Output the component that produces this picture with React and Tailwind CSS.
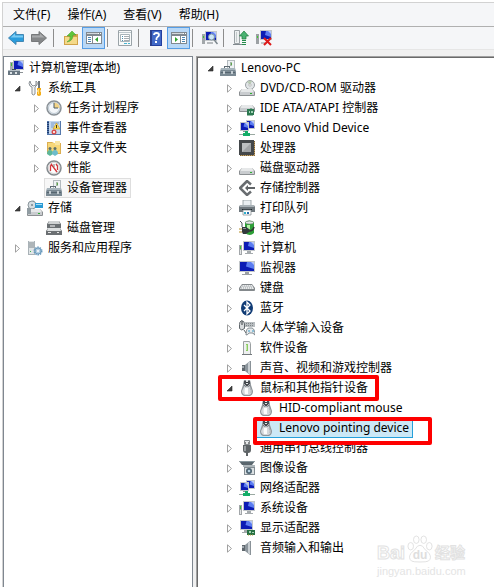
import { clsx } from "clsx";

const menus = ["文件(F)", "操作(A)", "查看(V)", "帮助(H)"];

function Icon({ children, className }) {
  return (
    <svg viewBox="0 0 16 16" className={clsx("size-4 shrink-0", className)} aria-hidden="true">
      {children}
    </svg>
  );
}

/* ---------- shared drawing parts ---------- */

function Screen({ x = 4, y = 1, w = 12, h = 9 }) {
  return (
    <g>
      <rect x={x} y={y} width={w} height={h} fill="#c3c7ca" />
      <rect x={x + 1} y={y + 1} width={w - 2} height={h - 2} fill="#0c1cb4" />
      <path d={`M${x + w / 2} ${y + 1}H${x + w - 1}V${y + h - 3}L${x + w / 2 - 1} ${y + h / 2}Z`} fill="#5c7df0" />
      <path d={`M${x + w - 4} ${y + 1}h3v3z`} fill="#b3c6fa" />
    </g>
  );
}

function Drive({ y = 8 }) {
  return (
    <g>
      <path d={`M3 ${y}h10l3 3v3q0 1-1 1H1q-1 0-1-1v-3z`} fill="#8b8f92" />
      <path d={`M3 ${y}h10l2 3H1z`} fill="#e6e8e9" />
      <rect x="1" y={y + 3} width="14" height="3" fill="#c9cccf" />
      <rect x="11" y={y + 4} width="2" height="1" fill="#2faf33" />
    </g>
  );
}

function Speaker() {
  return (
    <Icon>
      <path d="M3 5h3v6H3z" fill="#5f676d" />
      <path d="M3 6h2v2H3z" fill="#a2aab0" />
      <path d="M6 5l5-4v14l-5-4z" fill="#8d969d" />
      <path d="M9 3l2-2v14l-2-2z" fill="#c8ced2" />
      <path d="M11.500 1v14" stroke="#8a9298" />
    </Icon>
  );
}

function Mouse() {
  return (
    <Icon>
      <path d="M5 0h6q1 3 1 5l2 6q0 4-3 5H5q-3-1-3-5l2-6q0-2 1-5z" fill="#8f959a" />
      <path d="M6 5h4l3 6q0 3-3 4H6q-3-1-3-4z" fill="#d3d7da" />
      <path d="M5 1h6v4L9 7H7L5 5z" fill="#484d52" />
      <path d="M7 0h2v4H7z" fill="#e4e6e8" />
      <path d="M7 2.500h2" stroke="#33383c" />
      <path d="M5 4l3 3 3-3" fill="none" stroke="#c9cdd0" strokeWidth=".8" />
      <path d="M6 8h3v6H6q-1-3 0-6z" fill="#fafbfb" />
      <path d="M11 8q2 3 1 5" fill="none" stroke="#a9aeb2" />
    </Icon>
  );
}

function ComputerTower() {
  return (
    <Icon>
      <rect x="0" y="5" width="3" height="10" fill="#a2a6a9" />
      <rect x="1" y="6" width="1" height="3" fill="#3bc437" />
      <path d="M1 10h1v4H1z" fill="#e3e5e6" />
      <Screen x={4} y={1} w={12} h={10} />
      <path d="M8 11h4v2h2v1H6v-1h2z" fill="#a6abae" />
    </Icon>
  );
}

function NetworkPair() {
  return (
    <Icon>
      <Screen x={7} y={0} w={9} h={9} />
      <Screen x={1} y={2} w={9} h={9} />
      <path d="M4 11h4v1H4z" fill="#8b9194" />
      <path d="M0 14h16v1H0z" fill="#9aa9a2" />
      <path d="M6 11h3v2h2v3H4v-3h2z" fill="#14ad68" />
    </Icon>
  );
}

function Toolbox() {
  return (
    <Icon>
      <path d="M7 0h8v9H7z" fill="#b4bbbf" />
      <path d="M8 1h6v8H8z" fill="#eef2f4" />
      <path d="M10 2h2v4h-2z" fill="#a3b8a5" />
      <path d="M11 3h1v2h-1z" fill="#5ba549" />
      <path d="M4 6h6v2H9V7H5v1H4z" fill="#5d6a72" />
      <path d="M1 8h14l1 4v4H0v-4z" fill="#7a8993" />
      <path d="M1 8h14v2H1z" fill="#a5b3bb" />
      <path d="M1 12h14v1H1z" fill="#566570" />
      <path d="M3 11h2v3H3zM11 11h2v3h-2z" fill="#c5ced3" />
    </Icon>
  );
}

/* ---------- tree icons ---------- */

const icons = {
  management: (
    <Icon>
      <rect x="2" y="2" width="3" height="8" fill="#a9adb0" />
      <rect x="3" y="3" width="1" height="3" fill="#45bb37" />
      <Screen x={5} y={0} w={11} h={10} />
      <path d="M4 9h4v2H4z" fill="#444d55" />
      <path d="M0 10h12v5H0z" fill="#687681" />
      <path d="M0 10h12v1H0z" fill="#b5bfc6" />
      <path d="M2 12h2v2H2zM7 12h2v2H7z" fill="#dce2e5" />
      <path d="M12 12h3v1h-3z" fill="#8b9195" />
    </Icon>
  ),
  tools: (
    <Icon>
      <path d="M3 1Q1 3 3 6l2 1v7q1 2 3 0V7l2-2q1-3-1-4v4L6 6 4 4z" fill="#f2f4f5" stroke="#8b9196" strokeWidth="1" />
      <path d="M11 1h2v7h-2z" fill="#70777c" />
      <path d="M10 8h4v2l-1 1 1 1v3q-2 2-4 0v-3l1-1-1-1z" fill="#f3ad19" />
      <path d="M11 9h1v5h-1z" fill="#ffdc72" />
    </Icon>
  ),
  clock: (
    <Icon>
      <circle cx="8" cy="8" r="7" fill="#e7edf2" stroke="#8a9197" strokeWidth="1.5" />
      <circle cx="8" cy="8" r="5.5" fill="#f4f7fa" stroke="#bcc8d1" strokeWidth="1" />
      <path d="M8 8V2.500A5.500 5.500 0 0 1 13.500 8z" fill="#f2d386" />
      <path d="M8 3v5h4" fill="none" stroke="#4b5b67" />
    </Icon>
  ),
  events: (
    <Icon>
      <path d="M1 1h14v14H1z" fill="#5578ac" />
      <path d="M3 1h11v13H3z" fill="#c6d8ee" />
      <path d="M2 2v12" stroke="#203e71" strokeWidth="2" strokeDasharray="1 1" />
      <path d="M5 3h8M5 5h3M5 7h3" stroke="#7a9cc9" />
      <path d="M10.500 3l3.500 6H7z" fill="#fbdc5a" stroke="#c99a1c" strokeWidth=".6" />
      <path d="M10.500 5v3" stroke="#3e3514" />
      <circle cx="8" cy="12" r="2.5" fill="#d84d4d" />
      <path d="M7 11l2 2m0-2l-2 2" stroke="#fff" strokeWidth=".8" />
    </Icon>
  ),
  shared: (
    <Icon>
      <path d="M1 2h5l2 1h7v11H1z" fill="#dcae50" />
      <path d="M2 3h12v10H2z" fill="#f7d778" />
      <path d="M9 1h5v4H9z" fill="#f9e5a3" />
      <circle cx="4" cy="8.500" r="1.500" fill="#5c6f6a" />
      <circle cx="9" cy="8.500" r="1.500" fill="#5c6f6a" />
      <path d="M1 14q0-4 3-4t3 4l-3 2z" fill="#5db79a" />
      <path d="M6 14q0-4 3-4t3 4l-3 2z" fill="#6cbccb" />
    </Icon>
  ),
  performance: (
    <Icon>
      <circle cx="8" cy="8" r="7" fill="#f8f8f8" stroke="#858b8f" strokeWidth="1.500" />
      <circle cx="8" cy="8" r="5.500" fill="#fff" stroke="#bbb" strokeWidth=".6" />
      <path d="M4.500 11V6l1.500-2M10 4l1.500 2v4M5 4l6 8" fill="none" stroke="#d3343a" strokeWidth="1.300" />
      <path d="M8 4v3" stroke="#777" />
    </Icon>
  ),
  toolbox: <Toolbox />,
  storage: (
    <Icon>
      <path d="M2 2l5-2 1 6-6 2z" fill="#c5ced2" />
      <circle cx="5" cy="5" r="4" fill="#d7dde1" stroke="#89959b" />
      <circle cx="5" cy="5" r="1" fill="#77858d" />
      <rect x="8" y="3" width="8" height="5" fill="#2b9bd5" />
      <path d="M9 4h6v1H9z" fill="#a9dff8" />
      <Drive y={9} />
      <path d="M0 8h4v6H0z" fill="#919ca2" />
    </Icon>
  ),
  disk: (
    <Icon>
      <path d="M3 1h10l2 3v4H1V4z" fill="#6b7073" />
      <path d="M3 1h10l1 3H2z" fill="#cfd2d3" />
      <path d="M2 5h12v2H2z" fill="#6a6f72" />
      <path d="M2 8h12l2 3v4H0v-4z" fill="#6c7073" />
      <path d="M2 8h12l1 3H1z" fill="#dde0e1" />
      <path d="M2 12h3v1H2zM11 12h2v1h-2z" fill="#e6e6e6" />
      <path d="M4 6h5" stroke="#fff" />
    </Icon>
  ),
  services: (
    <Icon>
      <path d="M1 1h7v14H1z" fill="#a9b2b7" />
      <path d="M2 1h5v13H2z" fill="#e1e5e7" />
      <path d="M2 3h5M2 5h5M2 7h5" stroke="#7b858b" />
      <path d="M3 11h1v1H3z" fill="#3bb24a" />
      <circle cx="11" cy="11" r="3.500" fill="#cfe0ec" stroke="#6799bd" strokeWidth="2" strokeDasharray="1.400 .8" />
      <circle cx="11" cy="11" r="3" fill="#b2cee2" stroke="#6594b8" strokeWidth=".8" />
      <circle cx="11" cy="11" r="1" fill="#fff" />
    </Icon>
  ),
  dvd: (
    <Icon>
      <circle cx="11" cy="5" r="4.500" fill="#e1e5e7" stroke="#9aa0a4" />
      <path d="M11 5L8 2q3-2 5-1z" fill="#b9cbb4" />
      <circle cx="11" cy="5" r="1.200" fill="#fff" stroke="#999" strokeWidth=".6" />
      <Drive y={9} />
    </Icon>
  ),
  ide: (
    <Icon>
      <Drive y={5} />
      <rect x="8" y="9" width="7" height="6" fill="#2c7850" />
      <path d="M9 15v1m2-1v1m2-1v1M12 8v2" stroke="#2c7850" />
      <path d="M10 11h1v2h-1zM12 11h2v2h-2z" fill="#a5d3b8" />
    </Icon>
  ),
  network: <NetworkPair />,
  cpu: (
    <Icon>
      <rect x="1" y="1" width="15" height="15" fill="#c2a269" />
      <path d="M15.500 1v14.500H1" fill="none" stroke="#785e35" strokeDasharray="1 1" />
      <rect x="0" y="0" width="15" height="15" fill="#43474a" />
      <rect x="3" y="3" width="9" height="9" fill="#a0a3a6" />
      <path d="M3 3h9L3 12z" fill="#bcbfc1" />
    </Icon>
  ),
  drive: <Icon><Drive y={8} /></Icon>,
  controller: (
    <Icon>
      <path d="M12 4.500L8 1 1 8l7 7 4-3.500" fill="none" stroke="#696d70" strokeWidth="2.500" />
      <path d="M6 8l3-3v2h7v2H9v2z" fill="#606467" />
      <path d="M3 8l5-5" stroke="#a9acae" />
    </Icon>
  ),
  printer: (
    <Icon>
      <path d="M4 0h8v6H4z" fill="#e9eef1" stroke="#8e989d" strokeWidth=".8" />
      <path d="M1 5h14l1 2v5H0V7z" fill="#6f787e" />
      <path d="M1 5h14v2H1z" fill="#a8b1b6" />
      <path d="M3 9h10v1H3z" fill="#20282d" />
      <path d="M4 10h8v5H4z" fill="#fff" stroke="#7d858a" strokeWidth=".7" />
      <path d="M5 12h2v2H5z" fill="#2eb0cc" />
      <path d="M8 12h2v2H8z" fill="#286dac" />
    </Icon>
  ),
  battery: (
    <Icon>
      <path d="M6 2q4-3 9 0v11q-4 4-9 0z" fill="#2d9f37" />
      <ellipse cx="10.500" cy="2.500" rx="4" ry="1.500" fill="#e2e8e5" stroke="#78837d" strokeWidth=".7" />
      <path d="M8 5h3v4H8z" fill="#b5f0a6" />
      <path d="M1 1l2 2v4" fill="none" stroke="#4d565a" />
      <path d="M3 7h4l3 2v3l-3 2H4l-1-2z" fill="#32393c" />
      <path d="M4 8h3v1H4z" fill="#878f92" />
      <path d="M0 9h3M0 12h3" stroke="#b38d25" />
      <path d="M10 11q4 0 5-4" fill="none" stroke="#333" strokeWidth="1.500" />
    </Icon>
  ),
  computer: <ComputerTower />,
  monitor: (
    <Icon>
      <Screen x={0} y={1} w={16} h={11} />
      <path d="M6 12h4v2h3v1H3v-1h3z" fill="#9ba0a3" />
    </Icon>
  ),
  keyboard: (
    <Icon>
      <path d="M3 4h10l3 4v2q0 1-1 1H1q-1 0-1-1V8z" fill="#84898c" />
      <path d="M3 5h10l2 4H1z" fill="#e8eaeb" />
      <path d="M3 6h10M2 8h12" stroke="#a2a7aa" strokeDasharray="1 1" />
      <path d="M3 7h10" stroke="#b5babd" strokeDasharray="1 1" strokeDashoffset="1" />
    </Icon>
  ),
  bluetooth: (
    <Icon>
      <ellipse cx="8" cy="8" rx="6" ry="7.500" fill="#103b75" />
      <path d="M5 5l6 6-3 3V2l3 3-6 6" fill="none" stroke="#fff" strokeWidth="1.300" />
    </Icon>
  ),
  hid: (
    <Icon>
      <path d="M2.500.5q-2 1-2 4v4q2 3 5 0V4q0-3-3-3.500z" fill="#d9dcde" stroke="#5f666b" />
      <path d="M3 1v4" stroke="#343b3f" />
      <path d="M6 2h10v5H6z" fill="#b8bdc0" />
      <path d="M7 3.500h8M7 5.500h8" stroke="#7f8589" strokeDasharray="1 1" />
      <path d="M7 15q0-7 3-7h3q3 1 3 7-2-1-2-2h-4q-1 2-3 2z" fill="#e5e9eb" stroke="#6d777d" strokeWidth=".8" />
      <path d="M9 11h2m3-1v2" stroke="#3a9ac6" />
      <path d="M5 10l2 3" stroke="#60666a" />
    </Icon>
  ),
  software: (
    <Icon>
      <path d="M4.500 1.500h6l1 2v11h-7z" fill="#eef0f0" stroke="#9ba0a2" />
      <path d="M7 4h2v7H7z" fill="#8ccc63" />
      <path d="M7 5h1v5H7z" fill="#c4e7ad" />
      <path d="M3 14h10v1H3z" fill="#73797c" />
    </Icon>
  ),
  speaker: <Speaker />,
  mouse: <Mouse />,
  usb: (
    <Icon>
      <path d="M5.500.5h5v4h-5z" fill="#e8eaeb" stroke="#858a8d" />
      <path d="M6 2h1v2H6zM9 2h1v2H9z" fill="#888" />
      <path d="M4 5h8v5q0 3-3 3v3H7v-3q-3 0-3-3z" fill="#5e6366" />
      <path d="M5 6h2v5H5z" fill="#999ea1" />
    </Icon>
  ),
  imaging: (
    <Icon>
      <path d="M0 1h16l-3 4H3z" fill="#59666d" />
      <path d="M1 1h14v1H1z" fill="#87969d" />
      <path d="M4 5h12v2H4z" fill="#adb6ba" />
      <path d="M5 7h11v8H5z" fill="#828c92" />
      <path d="M6 8h9v6H6z" fill="#dce1e3" />
      <circle cx="10" cy="11" r="3" fill="#4e6472" />
      <circle cx="10" cy="11" r="1.300" fill="#b9d2e1" />
    </Icon>
  ),
  display: (
    <Icon>
      <Screen x={1} y={0} w={13} h={10} />
      <path d="M5 10h4v2h1v1H3v-1h2z" fill="#a4a9ac" />
      <rect x="8" y="10" width="8" height="5" fill="#277044" />
      <path d="M10 11h2v2h-2zM13 12h2v1h-2z" fill="#a3d2b0" />
      <path d="M9 15h6" stroke="#ba9c38" strokeDasharray="1 1" />
    </Icon>
  ),
};

/* ---------- toolbar icons ---------- */

function Arrow({ className, fill, light, stroke }) {
  return (
    <Icon className={className}>
      <path d="M.5 8L8 1.500v3h7.500v7H8v3z" fill={fill} stroke={stroke} strokeLinejoin="round" />
      <path d="M2.500 7.500L7 3.500v2h8v2z" fill={light} />
    </Icon>
  );
}

function PaneIcon({ flip }) {
  return (
    <Icon>
      <path d="M0 2h16v12H0z" fill="#818990" />
      <path d="M1 6h14v7H1z" fill="#fff" />
      <path d="M1 3.500h11" stroke="#d5dadd" />
      <path d="M12 3.500h3" stroke="#fff" strokeDasharray="1 1" />
      <g transform={flip ? "matrix(-1 0 0 1 16 0)" : undefined}>
        <path d="M6.500 6v7" stroke="#818990" />
        <path d="M2 7.500h3M2 9.500h3M2 11.500h3" stroke="#4c86b3" />
        <path d="M12 7v5L9 9.500z" fill="#2da52f" />
      </g>
    </Icon>
  );
}

const toolIcons = {
  back: <Arrow fill="#2a9cdc" light="#7bcbf3" stroke="#4387b3" />,
  forward: <Arrow className="-scale-x-100" fill="#858789" light="#a9abad" stroke="#77797b" />,
  up: (
    <Icon>
      <path d="M1 6h5l2-2h7v11H1z" fill="#d1a34a" />
      <path d="M2 7h12v7H2z" fill="#f4d989" />
      <path d="M4 12q4-2 3-6H4l5-5 4 4h-3q0 6-6 7z" fill="#5fc63b" stroke="#3f9b29" strokeWidth=".5" />
    </Icon>
  ),
  tree: <PaneIcon />,
  properties: (
    <Icon>
      <path d="M1.500.5h13v15h-13z" fill="#f8fafa" stroke="#9aa3a8" />
      <path d="M2 2.500h12" stroke="#bdc7cc" />
      <path d="M3.500 4.500h9v7h-9z" fill="#fff" stroke="#a9b4b9" />
      <path d="M5 6.500h1M5 8.500h1M5 10.500h1" stroke="#4790af" />
      <path d="M7 6.500h5M7 8.500h5M7 10.500h5" stroke="#a6adb1" />
      <path d="M7 13.500h3M11 13.500h2" stroke="#49b5d1" />
    </Icon>
  ),
  help: (
    <Icon>
      <path d="M2 0h12v16H2z" fill="#243f9f" />
      <path d="M4 1h9v14H4z" fill="#4169c7" />
      <path d="M2 0h2v16H2z" fill="#2b3f8c" />
      <path d="M6 5q0-2 2.500-2T11 5q0 1-1.500 2T8.500 10" fill="none" stroke="#fff" strokeWidth="1.800" />
      <path d="M7 11h2v2H7z" fill="#fff" />
    </Icon>
  ),
  pane: <PaneIcon flip />,
  scan: (
    <Icon>
      <rect x="0" y="4" width="3" height="10" fill="#a2a7aa" />
      <path d="M1 6h1v2H1z" fill="#3cbf35" />
      <Screen x={3} y={1} w={12} h={10} />
      <path d="M5 12h6v2H5z" fill="#b7bbbe" />
      <circle cx="9.500" cy="7" r="3" fill="#cde7f7" stroke="#8198a6" />
      <path d="M11.500 9l4 5" stroke="#7b868d" strokeWidth="1.500" />
    </Icon>
  ),
  update: (
    <Icon>
      <path d="M1.500.5h5v13h-5z" fill="#edf0f1" stroke="#9aa1a5" />
      <path d="M3.500 2v10" stroke="#c4cacc" />
      <path d="M0 14h9v1H0z" fill="#818a8f" />
      <path d="M11 1l4.500 5H13v3H9V6H6.500z" fill="#4bb273" stroke="#1c7a3b" strokeWidth=".7" />
      <path d="M9 10.500h4M9 12.500h4M9 14.500h4" stroke="#238b4a" />
    </Icon>
  ),
  uninstall: (
    <Icon>
      <rect x="0" y="4" width="3" height="10" fill="#9ca1a4" />
      <path d="M1 6h1v2H1z" fill="#3cd02e" />
      <Screen x={4} y={0} w={12} h={10} />
      <path d="M5 12h4v2H5z" fill="#c2c6c8" />
      <path d="M8 8l7 7M15 8l-7 7" stroke="#dd1a1a" strokeWidth="2" />
    </Icon>
  ),
};

/* ---------- data ---------- */

const consoleTree = [
  {
    label: "系统工具",
    icon: "tools",
    open: true,
    children: [
      { label: "任务计划程序", icon: "clock" },
      { label: "事件查看器", icon: "events" },
      { label: "共享文件夹", icon: "shared" },
      { label: "性能", icon: "performance" },
      { label: "设备管理器", icon: "toolbox", leaf: true, state: "current" },
    ],
  },
  {
    label: "存储",
    icon: "storage",
    open: true,
    children: [{ label: "磁盘管理", icon: "disk", leaf: true }],
  },
  { label: "服务和应用程序", icon: "services" },
];

const deviceTree = [
  {
    label: "Lenovo-PC",
    icon: "toolbox",
    open: true,
    children: [
      { label: "DVD/CD-ROM 驱动器", icon: "dvd" },
      { label: "IDE ATA/ATAPI 控制器", icon: "ide" },
      { label: "Lenovo Vhid Device", icon: "network" },
      { label: "处理器", icon: "cpu" },
      { label: "磁盘驱动器", icon: "drive" },
      { label: "存储控制器", icon: "controller" },
      { label: "打印队列", icon: "printer" },
      { label: "电池", icon: "battery" },
      { label: "计算机", icon: "computer" },
      { label: "监视器", icon: "monitor" },
      { label: "键盘", icon: "keyboard" },
      { label: "蓝牙", icon: "bluetooth" },
      { label: "人体学输入设备", icon: "hid" },
      { label: "软件设备", icon: "software" },
      { label: "声音、视频和游戏控制器", icon: "speaker" },
      {
        label: "鼠标和其他指针设备",
        icon: "mouse",
        open: true,
        mark: "-left-5 -right-2 -top-1 -bottom-1",
        children: [
          { label: "HID-compliant mouse", icon: "mouse", leaf: true },
          {
            label: "Lenovo pointing device",
            icon: "mouse",
            leaf: true,
            state: "selected",
            mark: "-left-1 -right-5 -top-0.5 -bottom-2",
          },
        ],
      },
      { label: "通用串行总线控制器", icon: "usb" },
      { label: "图像设备", icon: "imaging" },
      { label: "网络适配器", icon: "network" },
      { label: "系统设备", icon: "computer" },
      { label: "显示适配器", icon: "display" },
      { label: "音频输入和输出", icon: "speaker" },
    ],
  },
];

/* ---------- tree ---------- */

function Toggle({ open, label }) {
  return (
    <button type="button" aria-label={label} aria-expanded={!!open} className="flex h-5 w-3 items-center justify-center">
      <svg viewBox="0 0 8 9" className="h-[9px] w-2">
        {open ? (
          <path d="M7 2v5H2z" fill="#404040" stroke="#262626" strokeWidth=".6" />
        ) : (
          <path d="M2.500.8v7.400l4-3.700z" fill="#fff" stroke="#a0a0a0" />
        )}
      </svg>
    </button>
  );
}

function ItemLabel({ item }) {
  return (
    <button
      type="button"
      className={clsx(
        "relative flex h-5 items-center gap-[5px] border pr-[3px] pl-px text-left whitespace-nowrap",
        item.state === "selected" && "border-[#26a0da] bg-[#cbe8f6]",
        item.state === "current" && "border-[#dedede] bg-[#f7f7f7]",
        !item.state && "border-transparent"
      )}
    >
      {icons[item.icon]}
      <span>{item.label}</span>
      {item.mark && <span className={clsx("absolute z-10 rounded-xs border-4 border-[#fe0000]", item.mark)} />}
    </button>
  );
}

function Tree({ items, className }) {
  return (
    <ul className={className}>
      {items.map((item) => (
        <li key={item.label}>
          <div className="flex h-5 items-center gap-0.5">
            {item.leaf ? <span className="w-3" /> : <Toggle open={item.open} label={item.label} />}
            <ItemLabel item={item} />
          </div>
          {item.children && <Tree items={item.children} className="pl-[19px]" />}
        </li>
      ))}
    </ul>
  );
}

function ToolButton({ name, label, active }) {
  return (
    <button
      type="button"
      aria-label={label}
      className={clsx(
        "flex h-[22px] w-[23px] items-center justify-center border",
        active ? "border-[#569de5] bg-[#b9d8f6]" : "border-transparent"
      )}
    >
      {toolIcons[name]}
    </button>
  );
}

function Separator({ className }) {
  return <span className={clsx("h-[18px] w-px bg-[#8c8c8c]", className)} />;
}

function Watermark() {
  return (
    <div className="absolute right-[29px] bottom-2 w-[88px] font-['Liberation_Sans','Noto_Sans_CJK_SC',sans-serif] text-white" aria-hidden="true">
      <div className="flex items-end justify-between whitespace-nowrap">
        <span className="text-lg leading-5 font-bold [-webkit-text-stroke:1px_#e2e2e2]">Bai</span>
        <span className="relative">
          <svg viewBox="0 0 28 30" className="h-7 w-[26px]" fill="#fff" stroke="#e0e0e0">
            <ellipse cx="4" cy="12" rx="3" ry="4" />
            <ellipse cx="10" cy="5" rx="3" ry="4" />
            <ellipse cx="18" cy="5" rx="3" ry="4" />
            <ellipse cx="24" cy="12" rx="3" ry="4" />
            <path d="M14 11q3 0 5 4l5 5q3 5-1 8-2 1-9 1t-9-1q-4-3-1-8l5-5q2-4 5-4z" />
          </svg>
          <span className="absolute inset-x-0 bottom-0 text-center text-xs leading-4 font-bold text-[#dedede]">du</span>
        </span>
        <span className="text-[15px] leading-5 font-bold [-webkit-text-stroke:1px_#e2e2e2]">经验</span>
      </div>
      <div className="text-[11px] leading-4 whitespace-nowrap text-[#e4e4e4]">jingyan.baidu.com</div>
    </div>
  );
}

export default function App() {
  return (
    <div className="h-screen bg-white pt-0.5 pl-0.5 font-['Noto_Sans','Noto_Sans_CJK_SC',sans-serif] text-xs text-black">
      <div className="flex h-full flex-col border-t border-l border-[#d2d2d2] bg-[#f0f0f0]">
        <nav className="flex h-6 items-center gap-[17px] border-b border-[#b0b0b0] bg-[#f5f6f8] px-2.5">
          {menus.map((menu) => (
            <button key={menu} type="button">{menu}</button>
          ))}
        </nav>

        <div className="flex h-[23px] shrink-0 items-center border-b border-[#e6e6e6] bg-[#f5f6f8] pl-px">
          <ToolButton name="back" label="后退" />
          <ToolButton name="forward" label="前进" />
          <Separator className="mr-[5px] ml-[3px]" />
          <ToolButton name="up" label="向上" />
          <ToolButton name="tree" label="显示/隐藏控制台树" active />
          <Separator className="mr-[5px] ml-0.5" />
          <ToolButton name="properties" label="属性" />
          <Separator className="mr-[5px] ml-0.5" />
          <ToolButton name="help" label="帮助" />
          <ToolButton name="pane" label="显示/隐藏操作窗格" active />
          <Separator className="mr-[5px] ml-0.5" />
          <ToolButton name="scan" label="扫描检测硬件改动" />
          <Separator className="mr-[5px] ml-0.5" />
          <ToolButton name="update" label="更新驱动程序" />
          <ToolButton name="uninstall" label="卸载" />
        </div>

        <main className="flex min-h-0 flex-1 gap-[3px] pt-1.5">
          <section className="w-[190px] shrink-0 border-x border-t border-[#7f8790] bg-white pt-px">
            <div className="pl-0.5">
              <ItemLabel item={{ label: "计算机管理(本地)", icon: "management" }} />
            </div>
            <Tree items={consoleTree} className="pl-[7px]" />
          </section>
          <section className="relative min-w-0 flex-1 border-t border-l border-[#a0a0a0]">
            <div className="h-full border-t border-l border-[#696969] bg-white">
              <Tree items={deviceTree} className="pl-1.5" />
            </div>
            <Watermark />
          </section>
        </main>
      </div>
    </div>
  );
}
